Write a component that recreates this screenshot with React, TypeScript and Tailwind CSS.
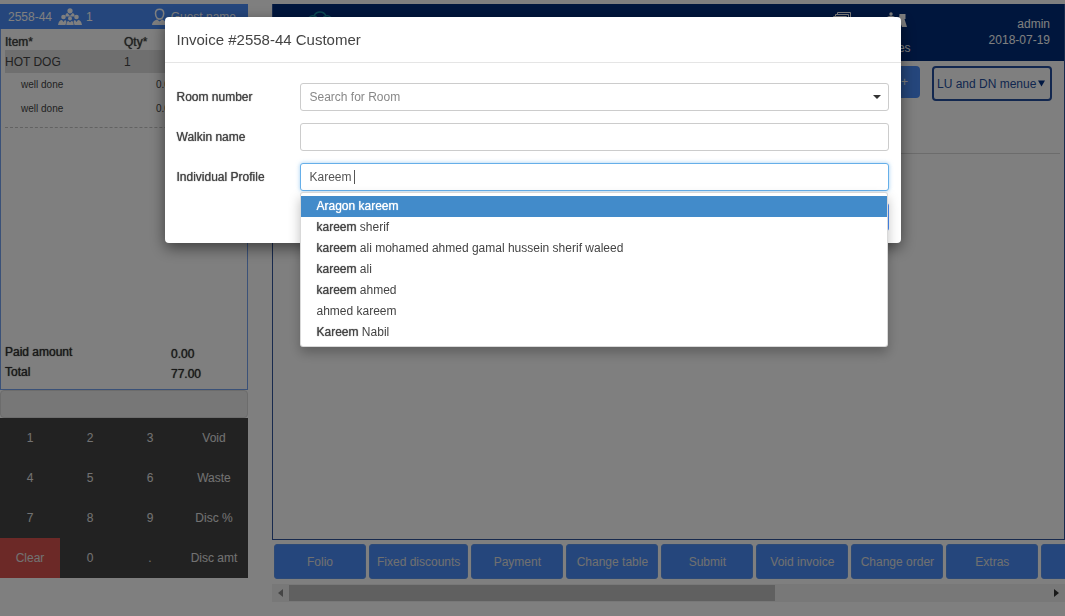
import React, { useState } from "react";

interface Key {
  label: string;
  danger?: boolean;
}

interface Profile {
  match: string;
  rest: string;
}

const KEYS: Key[] = [
  { label: "1" }, { label: "2" }, { label: "3" }, { label: "Void" },
  { label: "4" }, { label: "5" }, { label: "6" }, { label: "Waste" },
  { label: "7" }, { label: "8" }, { label: "9" }, { label: "Disc %" },
  { label: "Clear", danger: true }, { label: "0" }, { label: "." }, { label: "Disc amt" },
];

const ACTIONS = [
  "Folio", "Fixed discounts", "Payment", "Change table", "Submit",
  "Void invoice", "Change order", "Extras",
];

const PROFILES: Profile[] = [
  { match: "Aragon kareem", rest: "" },
  { match: "kareem", rest: " sherif" },
  { match: "kareem", rest: " ali mohamed ahmed gamal hussein sherif waleed" },
  { match: "kareem", rest: " ali" },
  { match: "kareem", rest: " ahmed" },
  { match: "", rest: "ahmed kareem" },
  { match: "Kareem", rest: " Nabil" },
];

// thickened regular weight, used for labels and totals
const HEAVY = "font-normal [text-shadow:0_0_1px_currentColor]";

const ACTION_BUTTON =
  "h-[35px] min-w-[92px] shrink-0 rounded-[3px] border border-[#5a94ee] bg-[#4a8df8] px-[7px] text-[#e0e0e0]";

function GroupIcon() {
  return (
    <svg className="w-6 h-[18px]" viewBox="0 0 24 18" fill="currentColor">
      <path d="M7.500 8.500V7q0-1.600 2-1.900L12 8l2.500-2.900q2 .3 2 1.900v1.500z" />
      <circle cx="12" cy="2.800" r="2.600" />
      <circle cx="5.500" cy="9" r="2.300" />
      <circle cx="12" cy="10.600" r="2" />
      <circle cx="18.500" cy="9" r="2.300" />
      <path d="M0 17q.8-5 4-5l1.500 2L7 12q1 .3 1.400 1.500L7.500 17zM8.300 17q.2-4 2.200-4l1.500 1.500 1.500-1.500q2 0 2.200 4zM16.500 17l-.9-3.500Q16 12.300 17 12l1.500 2 1.500-2q3.200 0 4 5z" />
    </svg>
  );
}

function GuestIcon() {
  return (
    <svg className="w-4 h-[18px]" viewBox="0 0 16 18" fill="none" stroke="currentColor">
      <path d="M4.500 5.500Q4.500 1.300 8.600 1.300t4.100 4.200q0 3-1.600 4.600-2.500 2-5 0Q4.500 8.500 4.500 5.500z" strokeWidth="1.500" />
      <path d="M1 17q0-4 5-5.500l2.600 2 2.600-2q4 1.500 4 5.500z" fill="currentColor" stroke="none" />
    </svg>
  );
}

function InvoicePanel() {
  return (
    <section className="w-[248px] shrink-0">
      <header className="flex items-center h-[25px] pl-2 pr-3 bg-[#4a8df8] text-white">
        <span>2558-44</span>
        <span className="ml-1.5"><GroupIcon /></span>
        <span className="ml-1">1</span>
        <span className="ml-auto mr-1"><GuestIcon /></span>
        <span>Guest name</span>
      </header>

      <div className="flex flex-col h-[361px] border border-t-0 border-[#74a2f0]">
        <div className="ml-1 pb-1.5 border-b border-dashed border-[#c4c4c4]">
          <table className="w-full text-left text-[#444]">
            <thead>
              <tr className="h-[21px]">
                <th className={`w-[119px] pt-1 leading-4 ${HEAVY}`}>Item*</th>
                <th className={`pt-1 leading-4 ${HEAVY}`}>Qty*</th>
              </tr>
            </thead>
            <tbody>
              <tr className="h-[23px] bg-[#dedede]">
                <td>HOT DOG</td>
                <td>1</td>
              </tr>
              <tr className="h-6 text-[10px]">
                <td className="pl-4">well done</td>
                <td className="pl-8">0.00</td>
              </tr>
              <tr className="h-6 text-[10px]">
                <td className="pl-4">well done</td>
                <td className="pl-8">0.00</td>
              </tr>
            </tbody>
          </table>
        </div>

        <dl className={`mt-auto mb-[7px] ml-1 grid grid-cols-[166px_1fr] leading-5 text-[#333] ${HEAVY}`}>
          <dt>Paid amount</dt>
          <dd className="pt-1 leading-4">0.00</dd>
          <dt>Total</dt>
          <dd className="pt-1 leading-4">77.00</dd>
        </dl>
      </div>

      <input
        aria-label="Keypad value"
        className="block w-full h-7 rounded-sm border border-[#d8d8d8] bg-[#eee]"
        readOnly
      />

      <div className="grid grid-cols-[60px_60px_60px_1fr] auto-rows-[40px] bg-[#444]">
        {KEYS.map((key) => (
          <button
            key={key.label}
            className={key.danger ? "bg-[#d9534f] text-[#e4e4e4]" : "text-[#e4e4e4]"}
          >
            {key.label}
          </button>
        ))}
      </div>
    </section>
  );
}

function TopBar() {
  return (
    <header className="flex h-[57px] pl-8 pr-[14px] bg-[#002c7a] text-white">
      <svg className="mt-1 w-8 h-8" viewBox="0 0 32 32" fill="none" stroke="#1894a8" strokeWidth="1.500">
        <path d="M9 8a6.500 6.500 0 0 1 12 0 5 5 0 0 1 6 6c0 10-24 10-24 0a5 5 0 0 1 6-6q2 0 3 2M21 8q-2 0-3 2" />
      </svg>
      <div className="ml-auto mr-[78px] flex gap-2.5">
        <button className="flex w-[46px] flex-col items-center">
          <svg className="mt-2 w-[18px] h-4" viewBox="0 0 18 16" fill="none" stroke="currentColor">
            <path d="M4.500 3V.5h13v10H15M2.500 5V2.500h13v10H13M.5 4.500h13v11H.5z" />
          </svg>
          <span className="mt-2 leading-6">Invoices</span>
        </button>
        <button className="flex w-[36px] flex-col items-end">
          <svg className="mr-1 mt-2 w-5 h-4" viewBox="0 0 20 16" fill="currentColor">
            <circle cx="4" cy="2" r="1.700" />
            <path d="M0 5q4-2.500 8 0v3H0zM12.500 2h6v5h-1l2.500 8h-5l-3-8z" />
          </svg>
          <span className="mt-2 leading-6">Tables</span>
        </button>
      </div>
      <div className="pt-3 text-right leading-4">
        <div>admin</div>
        <div>2018-07-19</div>
      </div>
    </header>
  );
}

function OrderPanel() {
  return (
    <main className="flex-1 min-w-0">
      <div className="h-[536px] border border-t-0 border-[#30549c]">
        <TopBar />
        <div className="flex justify-end gap-3 pt-[5px] pr-3">
          <button className="h-8 w-[92px] rounded-sm bg-[#4a8df8] pr-3 text-right text-white">+</button>
          <div className="relative">
            <select
              aria-label="Menu"
              className="h-[35px] w-[120px] appearance-none rounded-sm border-2 border-[#244f9e] pl-[3px] text-[#244f9e]"
            >
              <option>LU and DN menue</option>
            </select>
            <svg className="pointer-events-none absolute right-[7px] top-3.5 w-[7px] h-[7px]" viewBox="0 0 8 7" fill="#003087">
              <path d="M0 0h8L4 7z" />
            </svg>
          </div>
        </div>
        <hr className="mt-[52px] mr-1 ml-1 border-[#d8d8d8]" />
      </div>

      <div className="mt-1 ml-0.5 flex gap-[3px] overflow-hidden">
        {ACTIONS.map((action) => (
          <button key={action} className={ACTION_BUTTON}>{action}</button>
        ))}
        <button aria-label="More actions" className={ACTION_BUTTON} />
      </div>

      <div className="mt-[5px] flex h-[18px] items-center bg-[#f1f1f1]">
        <svg className="mx-1.5 w-[5px] h-2" viewBox="0 0 5 8" fill="#8a8a8a">
          <path d="M5 0v8L0 4z" />
        </svg>
        <div className="flex-1 h-4">
          <div className="h-4 w-[64%] bg-[#c1c1c1]" />
        </div>
        <svg className="mx-1.5 w-[5px] h-2" viewBox="0 0 5 8" fill="#333">
          <path d="M0 0v8l5-4z" />
        </svg>
      </div>
    </main>
  );
}

function CustomerDialog() {
  const [room, setRoom] = useState("");
  const [walkin, setWalkin] = useState("");
  const [profile, setProfile] = useState("Kareem ");

  const field = "block h-7 w-full rounded-[3px] border bg-white px-[9px] text-[#555] outline-none";

  return (
    <div
      role="dialog"
      aria-labelledby="dialog-title"
      className="mx-auto mt-[17px] w-full max-w-[736px] rounded-[4px] bg-white shadow-[0_5px_15px_rgba(0,0,0,0.5)]"
    >
      <h4 id="dialog-title" className="border-b border-[#e5e5e5] px-3 py-3 text-[15px] leading-[21px] text-[#444]">
        Invoice #2558-44 Customer
      </h4>

      <form className="grid grid-cols-[123px_1fr] gap-y-3 px-3 pt-5 pb-3 text-[#444]">
        <label htmlFor="room" className={`leading-7 ${HEAVY}`}>Room number</label>
        <div className="relative">
          <input
            id="room"
            className={`${field} border-[#ccc] placeholder:text-[#888]`}
            placeholder="Search for Room"
            value={room}
            onChange={(e) => setRoom(e.target.value)}
          />
          <svg className="absolute right-2 top-3 w-2 h-1" viewBox="0 0 8 4" fill="#333">
            <path d="M0 0h8L4 4z" />
          </svg>
        </div>

        <label htmlFor="walkin" className={`leading-7 ${HEAVY}`}>Walkin name</label>
        <input
          id="walkin"
          className={`${field} border-[#ccc]`}
          value={walkin}
          onChange={(e) => setWalkin(e.target.value)}
        />

        <label htmlFor="profile" className={`leading-7 ${HEAVY}`}>Individual Profile</label>
        <div className="relative">
          <input
            id="profile"
            className={`${field} border-[#66afe9] shadow-[0_0_4px_rgba(102,175,233,0.6)]`}
            value={profile}
            onChange={(e) => setProfile(e.target.value)}
          />
          <span className="absolute left-[54px] top-[7px] h-[14px] w-px bg-[#555]" />

          {/* Typeahead suggestions */}
          <ul
            role="listbox"
            className="absolute left-0 right-px top-[29px] z-10 rounded-[3px] border border-black/15 bg-white pt-[3px] pb-[3px] shadow-[0_6px_12px_rgba(0,0,0,0.25)]"
          >
            {PROFILES.map((p, i) => (
              <li
                key={p.match + p.rest}
                role="option"
                aria-selected={i === 0}
                className={`px-4 leading-[21px] ${i === 0 ? "bg-[#428bca] text-white" : "text-[#444]"}`}
              >
                <b className={HEAVY}>{p.match}</b>
                {p.rest}
              </li>
            ))}
          </ul>
        </div>

        <div className="col-span-2 flex justify-end">
          <button type="button" className="h-7 rounded-[3px] bg-[#4a8df8] px-3 text-white">Save</button>
        </div>
      </form>
    </div>
  );
}

export default function App() {
  return (
    <div className="min-h-screen overflow-hidden bg-white text-xs font-['Liberation_Sans',Arial,sans-serif]">
      <div className="flex gap-6 pt-1">
        <InvoicePanel />
        <OrderPanel />
      </div>

      <div className="fixed inset-0 bg-black/50">
        <CustomerDialog />
      </div>
    </div>
  );
}
